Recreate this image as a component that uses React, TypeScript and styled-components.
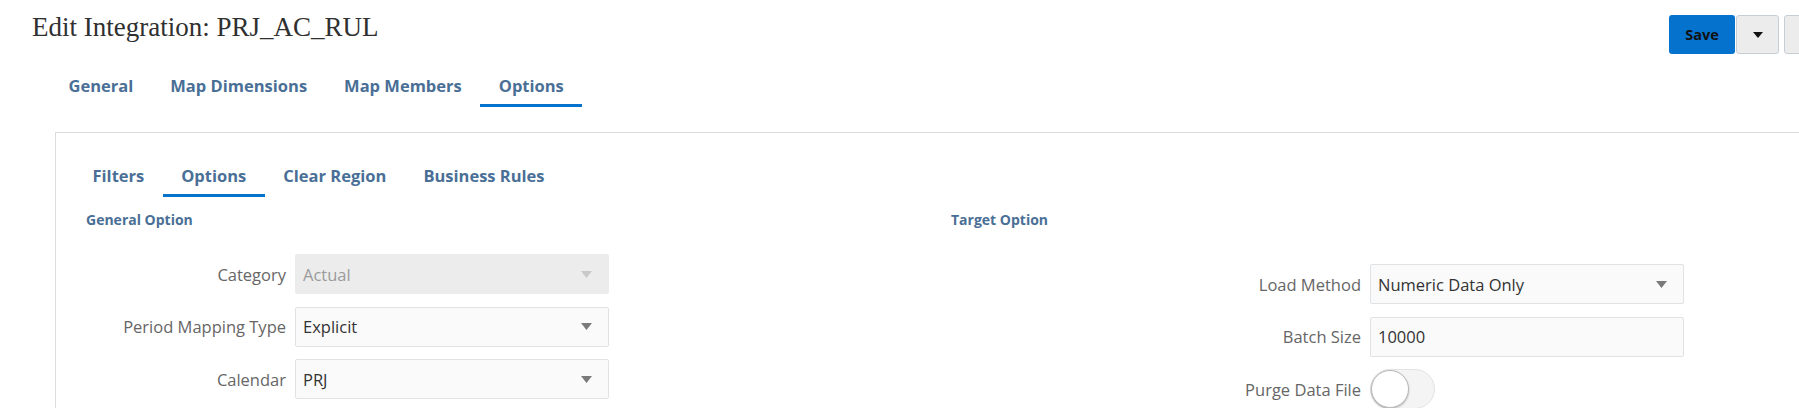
import React from "react";
import styled, { createGlobalStyle } from "styled-components";

const GlobalStyle = createGlobalStyle`
  html, body {
    margin: 0;
    padding: 0;
    background: #ffffff;
    overflow: hidden;
  }
  body {
    font-family: "Open Sans", "Noto Sans", Arial, sans-serif;
    color: #333333;
  }
`;

type Field = {
  label: string;
  value?: string;
  kind: "select" | "input" | "toggle";
  disabled?: boolean;
};

const generalOptions: Field[] = [
  { label: "Category", value: "Actual", kind: "select", disabled: true },
  { label: "Period Mapping Type", value: "Explicit", kind: "select" },
  { label: "Calendar", value: "PRJ", kind: "select" },
];

const targetOptions: Field[] = [
  { label: "Load Method", value: "Numeric Data Only", kind: "select" },
  { label: "Batch Size", value: "10000", kind: "input" },
  { label: "Purge Data File", kind: "toggle" },
];

const mainTabs = ["General", "Map Dimensions", "Map Members", "Options"];
const subTabs = ["Filters", "Options", "Clear Region", "Business Rules"];

function Caret({ light }: { light?: boolean }) {
  return (
    <svg width="11" height="7" viewBox="0 0 11 7">
      <path d="M0 0 L11 0 L5.5 7 Z" fill={light ? "#c9c9c9" : "#7a7a7a"} />
    </svg>
  );
}

function FieldControl({ field }: { field: Field }) {
  if (field.kind === "toggle") {
    return (
      <Toggle>
        <Knob />
      </Toggle>
    );
  }
  if (field.kind === "input") {
    return <TextInput value={field.value} readOnly />;
  }
  return (
    <Select $disabled={field.disabled}>
      <span>{field.value}</span>
      <Caret light={field.disabled} />
    </Select>
  );
}

export default function App() {
  return (
    <Page>
      <GlobalStyle />
      <Header>
        <Title>Edit Integration: PRJ_AC_RUL</Title>
        <Actions>
          <SaveButton>Save</SaveButton>
          <MenuButton>
            <svg width="10" height="6" viewBox="0 0 10 6">
              <path d="M0 0 L10 0 L5 6 Z" fill="#111" />
            </svg>
          </MenuButton>
          <GhostButton />
        </Actions>
      </Header>

      <TabBar>
        {mainTabs.map((t) => (
          <Tab key={t} $active={t === "Options"}>
            {t}
          </Tab>
        ))}
      </TabBar>

      <Panel>
        <SubTabBar>
          {subTabs.map((t) => (
            <Tab key={t} $active={t === "Options"}>
              {t}
            </Tab>
          ))}
        </SubTabBar>

        <Columns>
          <Column>
            <SectionTitle>General Option</SectionTitle>
            <Form $labelWidth={200} $offset={25}>
              {generalOptions.map((f) => (
                <Row key={f.label}>
                  <FieldLabel>{f.label}</FieldLabel>
                  <FieldControl field={f} />
                </Row>
              ))}
            </Form>
          </Column>
          <Column>
            <SectionTitle>Target Option</SectionTitle>
            <Form $labelWidth={410} $offset={35}>
              {targetOptions.map((f) => (
                <Row key={f.label}>
                  <FieldLabel>{f.label}</FieldLabel>
                  <FieldControl field={f} />
                </Row>
              ))}
            </Form>
          </Column>
        </Columns>
      </Panel>
    </Page>
  );
}

// =================== Styled Components ===================

const Page = styled.div`
  width: 1860px;
  min-height: 408px;
`;

const Header = styled.div`
  display: flex;
  align-items: flex-start;
  justify-content: space-between;
  padding: 12px 0 0 32px;
  height: 54px;
  box-sizing: border-box;
`;

const Title = styled.h1`
  margin: 0;
  font-family: "Liberation Serif", "Times New Roman", serif;
  font-weight: 400;
  font-size: 27px;
  line-height: 30px;
  color: #303030;
`;

const Actions = styled.div`
  display: flex;
  align-items: center;
  gap: 1px;
  padding-top: 3px;
  margin-right: 22px;
`;

const SaveButton = styled.button`
  width: 66px;
  height: 39px;
  border: none;
  border-radius: 3px;
  background: #0572ce;
  color: #111;
  font-family: "Open Sans", sans-serif;
  font-weight: 700;
  font-size: 14.5px;
`;

const MenuButton = styled.button`
  width: 43px;
  height: 39px;
  border: 1px solid #c4ced7;
  border-radius: 3px;
  background: #ececec;
  display: flex;
  align-items: center;
  justify-content: center;
  padding: 0;
`;

const GhostButton = styled(MenuButton)`
  margin-left: 4px;
  width: 54px;
`;

const TabBar = styled.div`
  display: flex;
  padding-left: 50px;
  height: 53px;
  align-items: flex-end;
  box-sizing: border-box;
`;

const Tab = styled.div<{ $active?: boolean }>`
  padding: 0 18.5px;
  height: 40px;
  line-height: 38px;
  font-size: 16.5px;
  font-weight: 700;
  color: #4a6f96;
  white-space: nowrap;
  border-bottom: 3px solid ${({ $active }) => ($active ? "#0572ce" : "transparent")};
  box-sizing: border-box;
`;

const Panel = styled.div`
  margin: 25px 0 0 55px;
  border-top: 1px solid #dcdcdc;
  border-left: 1px solid #dcdcdc;
  padding: 0 0 0 18px;
  height: 300px;
`;

const SubTabBar = styled.div`
  display: flex;
  height: 64px;
  align-items: flex-end;
  box-sizing: border-box;
`;

const Columns = styled.div`
  display: grid;
  grid-template-columns: 865px 1fr;
  padding: 14px 0 0 12px;
`;

const Column = styled.div`
  display: flex;
  flex-direction: column;
`;

const SectionTitle = styled.div`
  font-size: 14px;
  font-weight: 700;
  line-height: 18px;
  color: #4a6f96;
`;

const Form = styled.div<{ $labelWidth: number; $offset: number }>`
  display: grid;
  grid-template-columns: ${({ $labelWidth }) => $labelWidth}px auto;
  grid-auto-rows: 40px;
  column-gap: 9px;
  row-gap: 12.5px;
  margin-top: ${({ $offset }) => $offset}px;
  justify-content: start;
`;

const Row = styled.div`
  display: contents;
`;

const FieldLabel = styled.label`
  align-self: center;
  text-align: right;
  font-size: 16.5px;
  color: #666666;
  white-space: nowrap;
`;

const Select = styled.div<{ $disabled?: boolean }>`
  width: 314px;
  height: 40px;
  box-sizing: border-box;
  display: flex;
  align-items: center;
  justify-content: space-between;
  padding: 0 16px 0 7px;
  border-radius: 2px;
  border: 1px solid ${({ $disabled }) => ($disabled ? "#ececec" : "#dfe3e6")};
  background: ${({ $disabled }) => ($disabled ? "#ececec" : "#fafafa")};
  color: ${({ $disabled }) => ($disabled ? "#9a9a9a" : "#333333")};
  font-size: 16.5px;
`;

const TextInput = styled.input`
  width: 314px;
  height: 40px;
  box-sizing: border-box;
  padding: 0 7px;
  border-radius: 2px;
  border: 1px solid #dfe3e6;
  background: #fafafa;
  color: #333333;
  font-family: "Open Sans", sans-serif;
  font-size: 16.5px;
  outline: none;
`;

const Toggle = styled.div`
  width: 65px;
  height: 40px;
  box-sizing: border-box;
  border-radius: 20px;
  border: 1px solid #e3e3e3;
  background: #f4f4f4;
  position: relative;
`;

const Knob = styled.div`
  position: absolute;
  left: 0;
  top: 0;
  width: 38px;
  height: 38px;
  border-radius: 50%;
  background: #ffffff;
  border: 1px solid #b9b9b9;
  box-shadow: 0 1px 2px rgba(0, 0, 0, 0.25);
  box-sizing: border-box;
`;
